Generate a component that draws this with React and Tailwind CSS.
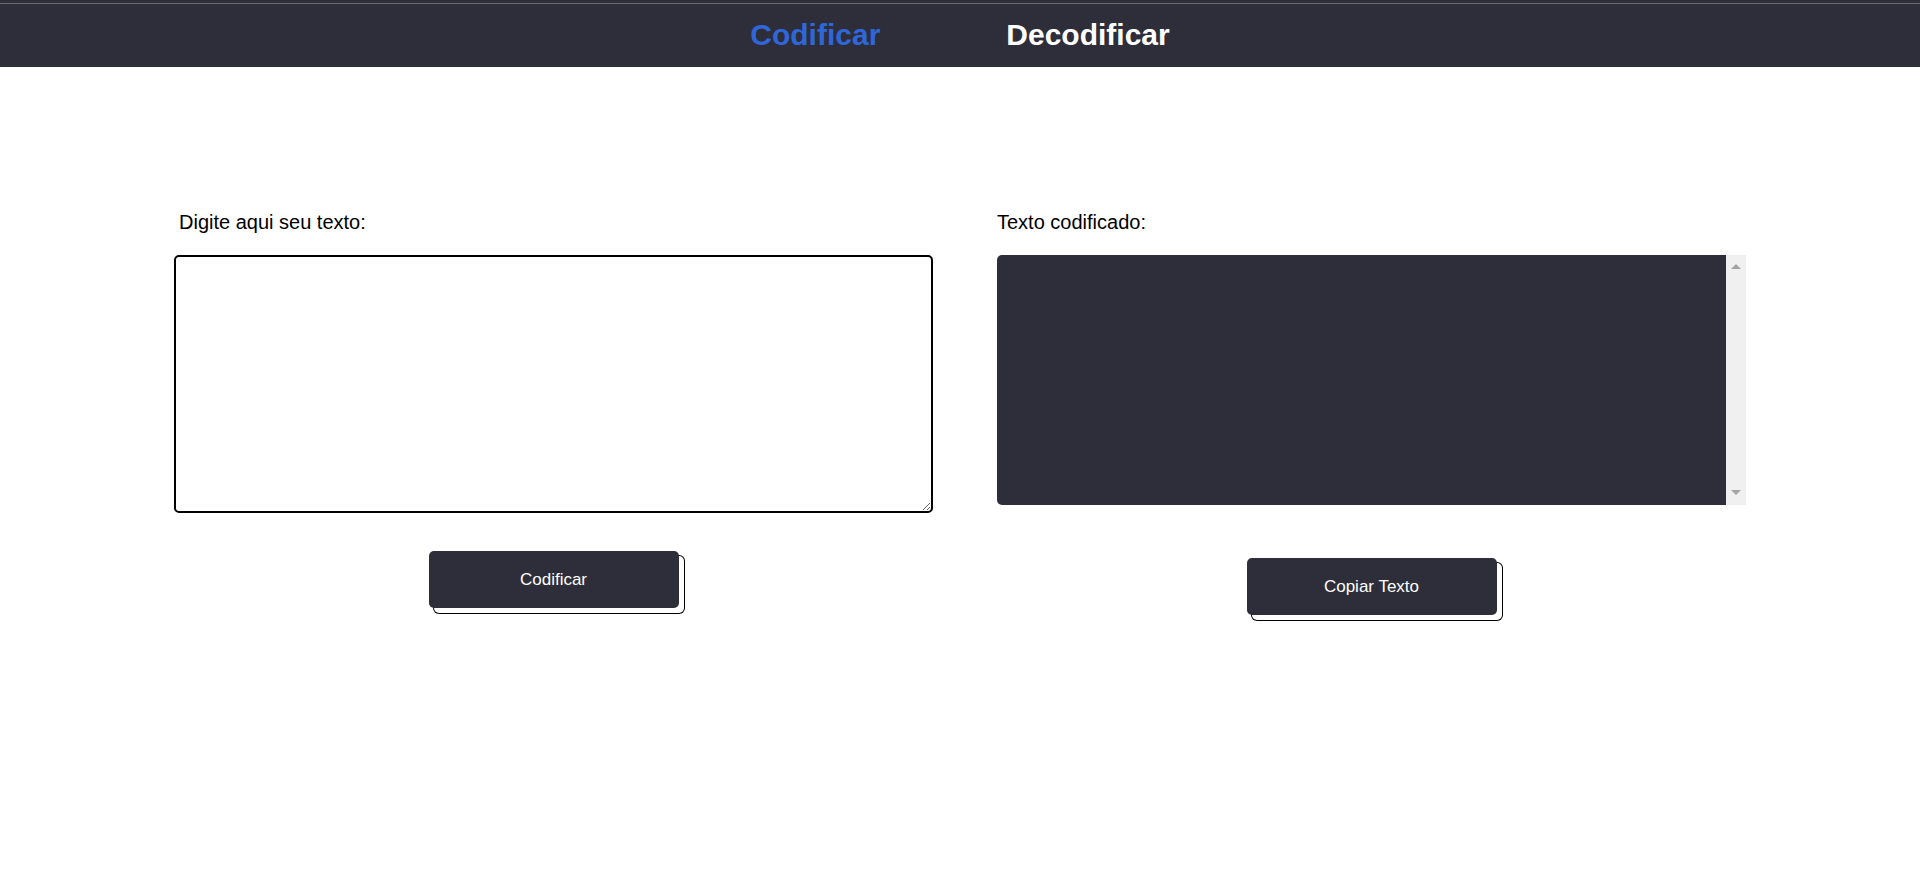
import React from 'react';

// ===== HEADER =====
const Header = () => {
  return (
    <header className="bg-[#2e2e3a]">
      <div className="h-[3px] bg-[#2e2e3a]" />
      <div className="h-px bg-[#6b6b70]" />
      <nav className="h-[63px] pb-[2px] flex items-center justify-center gap-[126px] text-[30px] font-bold">
        <a className="text-[#2f66d9] cursor-pointer">Codificar</a>
        <a className="text-white cursor-pointer">Decodificar</a>
      </nav>
    </header>
  );
};

// ===== ACTION BUTTON =====
const ActionButton = ({ children, className = '' }) => {
  return (
    <button
      className={`
        self-center w-[250px] h-[57px] rounded-[5px]
        bg-[#2e2e3a] text-white text-[17px]
        shadow-[5px_5px_0_0_#fff,5px_5px_0_1px_#000]
        ${className}
      `}
    >
      {children}
    </button>
  );
};

// ===== FAKE SCROLLBAR (classic style) =====
const ScrollTrack = () => {
  return (
    <div className="w-[20px] bg-[#f0f0f0] flex flex-col items-center justify-between pt-[9px] pb-[10px]">
      <div className="w-0 h-0 border-x-[5px] border-x-transparent border-b-[5px] border-b-[#a3a3a3]" />
      <div className="w-0 h-0 border-x-[5px] border-x-transparent border-t-[5px] border-t-[#a3a3a3]" />
    </div>
  );
};

export default function App() {
  return (
    <div className="min-h-screen bg-white text-black font-['Liberation_Sans',Arial,sans-serif]">
      <Header />

      <main className="flex justify-center gap-[64px] pt-[144px]">
        {/* Input */}
        <section className="w-[759px] flex flex-col">
          <label className="ml-[5px] text-[20px] leading-[23px]">Digite aqui seu texto:</label>
          <textarea className="mt-[21px] h-[258px] w-full border-2 border-black rounded-[5px] p-2 text-[16px] outline-none" />
          <ActionButton className="mt-[38px]">Codificar</ActionButton>
        </section>

        {/* Output */}
        <section className="w-[749px] flex flex-col">
          <label className="text-[20px] leading-[23px]">Texto codificado:</label>
          <div className="mt-[21px] h-[250px] flex">
            <textarea
              readOnly
              className="flex-1 h-full bg-[#2e2e3a] text-white rounded-l-[5px] p-2 text-[16px] resize-none outline-none"
            />
            <ScrollTrack />
          </div>
          <ActionButton className="mt-[53px]">Copiar Texto</ActionButton>
        </section>
      </main>
    </div>
  );
}
